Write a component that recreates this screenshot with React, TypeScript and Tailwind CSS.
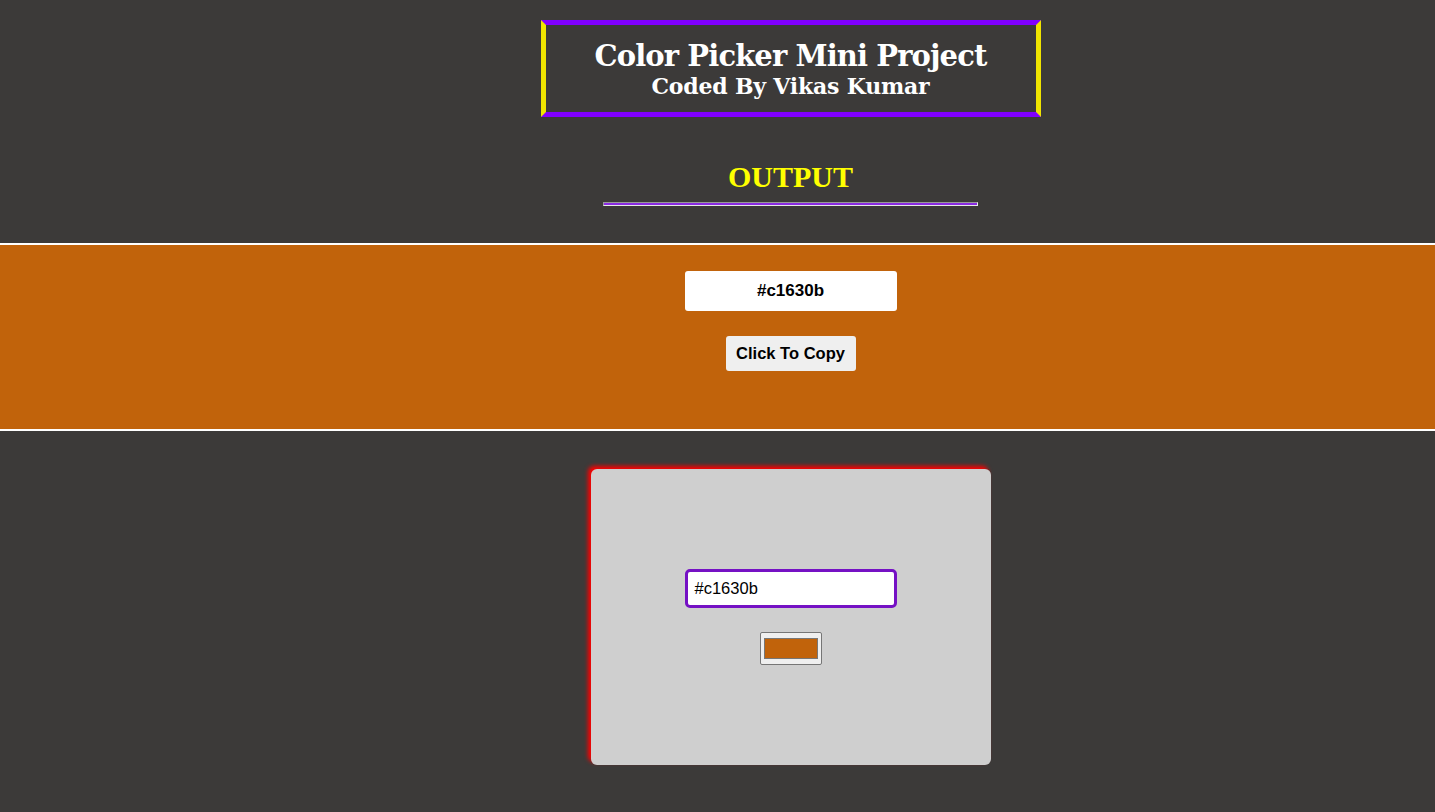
import React from "react";

export default function App() {
  return (
    <div className="min-h-[812px] w-full bg-[#3c3a39] pt-[20px] pb-[46px]" style={{ fontFamily: '"Liberation Sans", Arial, sans-serif' }}>
      <div className="flex flex-col items-center pl-[146px]">
        <div className="flex h-[97px] w-[500px] flex-col items-center justify-center border-[5px] border-x-[#f0e400] border-y-[#8000ff] pt-[1px] text-white" style={{ fontFamily: '"DejaVu Serif", Georgia, serif' }}>
          <div className="text-[29px] font-bold leading-[34px] tracking-[-0.9px]">Color Picker Mini Project</div>
          <div className="text-[22px] font-bold leading-[26px] tracking-[-0.2px]">Coded By Vikas Kumar</div>
        </div>
        <div className="mt-[43px] text-[30px] font-bold leading-[34px] text-[#ffff00]" style={{ fontFamily: '"Liberation Serif", "Times New Roman", serif' }}>
          OUTPUT
        </div>
        <div className="mt-[8px] h-[4px] w-[375px] border border-t-[#9a9a9a] border-l-[#9a9a9a] border-b-[#e8e8e8] border-r-[#e8e8e8] bg-[#8a2be2]" />
      </div>

      <div className="mt-[37px] border-y-2 border-white bg-[#c1630b]">
        <div className="flex h-[184px] flex-col items-center pl-[146px] pt-[26px]">
          <div className="flex h-[40px] w-[212px] items-center justify-center rounded-[3px] bg-white text-[17px] font-bold text-black">
            #c1630b
          </div>
          <button className="mt-[25px] h-[35px] w-[130px] rounded-[3px] bg-[#efefef] text-[16.5px] font-bold text-black">
            Click To Copy
          </button>
        </div>
      </div>

      <div className="mt-[38px] flex flex-col items-center pl-[146px]">
        <div className="flex h-[296px] w-[400px] flex-col items-center rounded-[6px] bg-[#cfcfcf] pt-[100px] shadow-[-3px_-3px_4px_#ff0000]">
          <div className="flex h-[39px] w-[212px] items-center rounded-[5px] border-[3px] border-[#7511c4] bg-white pl-[7px] text-[16.5px] text-black">
            #c1630b
          </div>
          <div className="mt-[24px] flex h-[33px] w-[62px] items-center justify-center rounded-[2px] border border-[#767676] bg-[#efefef]">
            <div className="h-[21px] w-[54px] border border-[#777777] bg-[#c1630b]" />
          </div>
        </div>
      </div>
    </div>
  );
}
